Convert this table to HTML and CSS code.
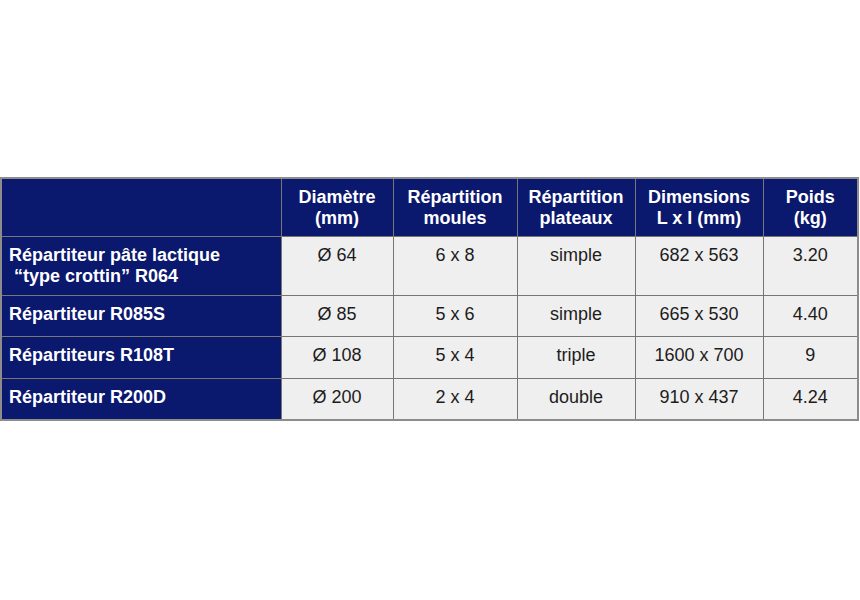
FILE: index.html
```html
<!DOCTYPE html>
<html lang="fr">
<head>
<meta charset="utf-8">
<title>Répartiteurs</title>
<link rel="stylesheet" href="styles.css">
</head>
<body>
<div class="page">
<table class="specs">
  <colgroup>
    <col class="c-name">
    <col class="c-diam">
    <col class="c-moules">
    <col class="c-plateaux">
    <col class="c-dim">
    <col class="c-poids">
  </colgroup>
  <thead>
    <tr class="r-head">
      <th></th>
      <th>Diamètre<br>(mm)</th>
      <th>Répartition<br>moules</th>
      <th>Répartition<br>plateaux</th>
      <th>Dimensions<br>L x l (mm)</th>
      <th>Poids<br>(kg)</th>
    </tr>
  </thead>
  <tbody>
    <tr class="r-tall">
      <th class="name">Répartiteur pâte lactique<br>&nbsp;“type crottin” R064</th>
      <td>Ø 64</td>
      <td>6 x 8</td>
      <td>simple</td>
      <td>682 x 563</td>
      <td>3.20</td>
    </tr>
    <tr class="r-41">
      <th class="name">Répartiteur R085S</th>
      <td>Ø 85</td>
      <td>5 x 6</td>
      <td>simple</td>
      <td>665 x 530</td>
      <td>4.40</td>
    </tr>
    <tr class="r-42">
      <th class="name">Répartiteurs R108T</th>
      <td>Ø 108</td>
      <td>5 x 4</td>
      <td>triple</td>
      <td>1600 x 700</td>
      <td>9</td>
    </tr>
    <tr class="r-42">
      <th class="name">Répartiteur R200D</th>
      <td>Ø 200</td>
      <td>2 x 4</td>
      <td>double</td>
      <td>910 x 437</td>
      <td>4.24</td>
    </tr>
  </tbody>
</table>
</div>
</body>
</html>
```

FILE: styles.css
```css
html, body {
  margin: 0;
  padding: 0;
  background: #ffffff;
}

.page {
  padding-top: 177px;
}

.specs {
  border-collapse: collapse;
  border: 2px solid #8c8c8c;
  font-family: "Liberation Sans", Arial, Helvetica, sans-serif;
  font-size: 18px;
  line-height: 21px;
  table-layout: fixed;
}

.c-name { width: 280px; }
.c-diam { width: 112px; }
.c-moules { width: 124px; }
.c-plateaux { width: 118px; }
.c-dim { width: 128px; }
.c-poids { width: 95px; }

.specs th,
.specs td {
  border: 1px solid #767676;
  padding: 8px 4px 0;
  vertical-align: top;
  text-align: center;
}

.specs th {
  background: #0a186e;
  color: #ffffff;
  font-weight: bold;
}

.specs td {
  background: #efefef;
  color: #1c1c1c;
  font-weight: normal;
}

.specs th.name {
  text-align: left;
  padding-left: 7px;
}

.r-head { height: 58px; }
.r-tall { height: 59px; }
.r-41 { height: 41px; }
.r-42 { height: 42px; }
```
